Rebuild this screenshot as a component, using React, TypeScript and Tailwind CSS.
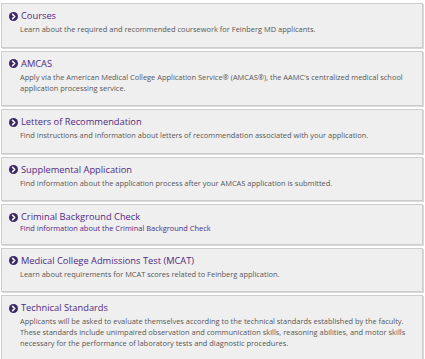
import React from "react";

type Item = { title: string; desc: string[]; link?: boolean; tight?: boolean };

const items: Item[] = [
  { title: "Courses", desc: ["Learn about the required and recommended coursework for Feinberg MD applicants."] },
  {
    title: "AMCAS",
    desc: [
      "Apply via the American Medical College Application Service® (AMCAS®), the AAMC's centralized medical school",
      "application processing service.",
    ],
  },
  { title: "Letters of Recommendation", desc: ["Find instructions and information about letters of recommendation associated with your application."] },
  { title: "Supplemental Application", desc: ["Find information about the application process after your AMCAS application is submitted."] },
  { title: "Criminal Background Check", desc: ["Find information about the Criminal Background Check"], link: true, tight: true },
  { title: "Medical College Admissions Test (MCAT)", desc: ["Learn about requirements for MCAT scores related to Feinberg application."] },
  {
    title: "Technical Standards",
    desc: [
      "Applicants will be asked to evaluate themselves according to the technical standards established by the faculty.",
      "These standards include unimpaired observation and communication skills, reasoning abilities, and motor skills",
      "necessary for the performance of laboratory tests and diagnostic procedures.",
    ],
  },
];

function Icon() {
  return (
    <svg width="9" height="9" viewBox="0 0 10 10" className="shrink-0">
      <circle cx="5" cy="5" r="5" fill="#3a2766" />
      <path d="M4 2.6 L6.4 5 L4 7.4" stroke="#fff" strokeWidth="1.7" fill="none" strokeLinecap="round" strokeLinejoin="round" />
    </svg>
  );
}

export default function App() {
  return (
    <div
      className="w-[425px] h-[359px] overflow-hidden bg-white flex flex-col gap-[3px] pt-[3px] pl-[1px] pr-[2px] leading-none"
      style={{ fontFamily: '"Open Sans", "Noto Sans", sans-serif' }}
    >
      {items.map((it) => (
        <div
          key={it.title}
          className={`border border-[#cdcdcd] bg-[#efefef] shadow-[1px_1px_0_#d9d9d9] pl-[7px] pt-[5px] ${it.tight ? "pb-[9.5px]" : "pb-[11.5px]"}`}
        >
          <div className="flex items-center gap-[3px] h-[14px]">
            <Icon />
            <span className="text-[9.3px] leading-[14px] text-[#4e2a84]">{it.title}</span>
          </div>
          <div className={`pl-[11px] ${it.tight ? "mt-[-1px]" : "mt-[1px]"}`}>
            {it.desc.map((d, i) => (
              <div
                key={i}
                className={`text-[7.45px] leading-[11px] whitespace-nowrap ${it.link ? "text-[#4e2a84]" : "text-[#575757]"}`}
              >
                {d}
              </div>
            ))}
          </div>
        </div>
      ))}
    </div>
  );
}
